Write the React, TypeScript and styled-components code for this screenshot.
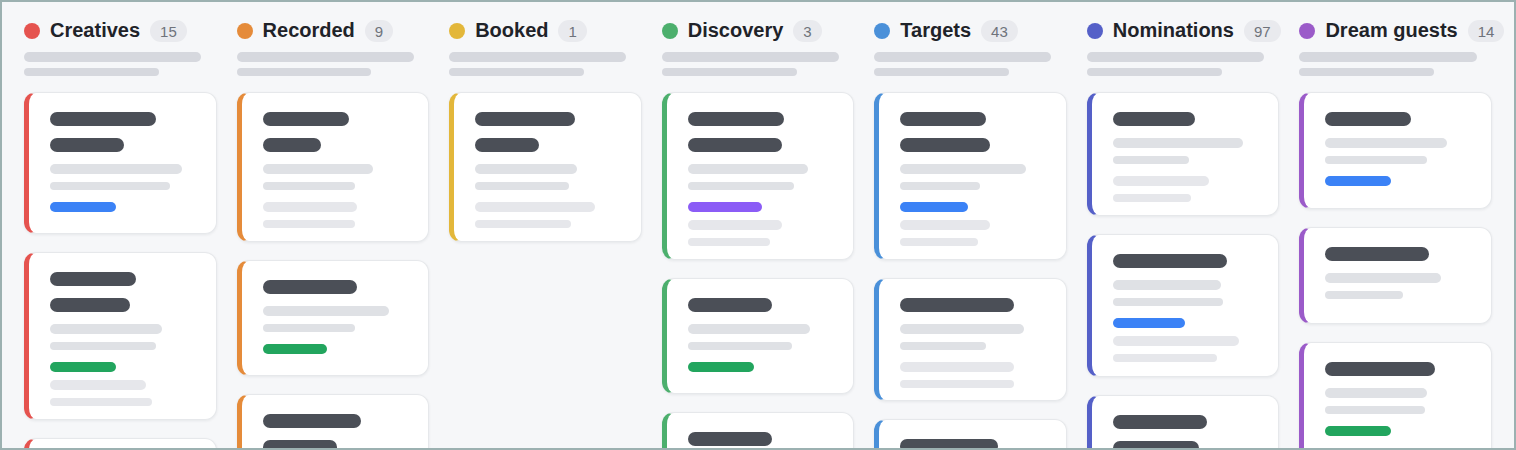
import React from "react";
import styled, { createGlobalStyle } from "styled-components";

type Block =
  | { kind: "title"; widths: number[] }
  | { kind: "pair"; widths: [number, number]; faint?: boolean }
  | { kind: "tag"; width: number; color: string };

interface CardData {
  height: number;
  blocks: Block[];
}

interface Stage {
  name: string;
  count: number;
  color: string;
  cards: CardData[];
}

const BLUE = "#3b82f6";
const GREEN = "#22a55e";
const PURPLE = "#8b5cf6";

const stages: Stage[] = [
  {
    name: "Creatives",
    count: 15,
    color: "#e5534f",
    cards: [
      {
        height: 142,
        blocks: [
          { kind: "title", widths: [106, 74] },
          { kind: "pair", widths: [132, 120] },
          { kind: "tag", width: 66, color: BLUE },
        ],
      },
      {
        height: 168,
        blocks: [
          { kind: "title", widths: [86, 80] },
          { kind: "pair", widths: [112, 106] },
          { kind: "tag", width: 66, color: GREEN },
          { kind: "pair", widths: [96, 102], faint: true },
        ],
      },
      {
        height: 140,
        blocks: [
          { kind: "title", widths: [100, 80] },
          { kind: "pair", widths: [120, 100] },
        ],
      },
    ],
  },
  {
    name: "Recorded",
    count: 9,
    color: "#e58b3a",
    cards: [
      {
        height: 150,
        blocks: [
          { kind: "title", widths: [86, 58] },
          { kind: "pair", widths: [110, 92] },
          { kind: "pair", widths: [94, 92], faint: true },
        ],
      },
      {
        height: 116,
        blocks: [
          { kind: "title", widths: [94] },
          { kind: "pair", widths: [126, 92] },
          { kind: "tag", width: 64, color: GREEN },
        ],
      },
      {
        height: 140,
        blocks: [
          { kind: "title", widths: [98, 74] },
          { kind: "pair", widths: [116, 96] },
        ],
      },
    ],
  },
  {
    name: "Booked",
    count: 1,
    color: "#e3b73a",
    cards: [
      {
        height: 150,
        blocks: [
          { kind: "title", widths: [100, 64] },
          { kind: "pair", widths: [102, 94] },
          { kind: "pair", widths: [120, 96], faint: true },
        ],
      },
    ],
  },
  {
    name: "Discovery",
    count: 3,
    color: "#4caf6d",
    cards: [
      {
        height: 168,
        blocks: [
          { kind: "title", widths: [96, 94] },
          { kind: "pair", widths: [120, 106] },
          { kind: "tag", width: 74, color: PURPLE },
          { kind: "pair", widths: [94, 82], faint: true },
        ],
      },
      {
        height: 116,
        blocks: [
          { kind: "title", widths: [84] },
          { kind: "pair", widths: [122, 104] },
          { kind: "tag", width: 66, color: GREEN },
        ],
      },
      {
        height: 140,
        blocks: [
          { kind: "title", widths: [84, 70] },
          { kind: "pair", widths: [110, 90] },
        ],
      },
    ],
  },
  {
    name: "Targets",
    count: 43,
    color: "#4a90d9",
    cards: [
      {
        height: 168,
        blocks: [
          { kind: "title", widths: [86, 90] },
          { kind: "pair", widths: [126, 80] },
          { kind: "tag", width: 68, color: BLUE },
          { kind: "pair", widths: [90, 78], faint: true },
        ],
      },
      {
        height: 123,
        blocks: [
          { kind: "title", widths: [114] },
          { kind: "pair", widths: [124, 86] },
          { kind: "pair", widths: [114, 114], faint: true },
        ],
      },
      {
        height: 140,
        blocks: [
          { kind: "title", widths: [98, 80] },
          { kind: "pair", widths: [110, 90] },
        ],
      },
    ],
  },
  {
    name: "Nominations",
    count: 97,
    color: "#5560c8",
    cards: [
      {
        height: 124,
        blocks: [
          { kind: "title", widths: [82] },
          { kind: "pair", widths: [130, 76] },
          { kind: "pair", widths: [96, 78], faint: true },
        ],
      },
      {
        height: 143,
        blocks: [
          { kind: "title", widths: [114] },
          { kind: "pair", widths: [108, 110] },
          { kind: "tag", width: 72, color: BLUE },
          { kind: "pair", widths: [126, 104], faint: true },
        ],
      },
      {
        height: 140,
        blocks: [
          { kind: "title", widths: [94, 86] },
          { kind: "pair", widths: [110, 90] },
        ],
      },
    ],
  },
  {
    name: "Dream guests",
    count: 14,
    color: "#9b5bc9",
    cards: [
      {
        height: 117,
        blocks: [
          { kind: "title", widths: [86] },
          { kind: "pair", widths: [122, 102] },
          { kind: "tag", width: 66, color: BLUE },
        ],
      },
      {
        height: 97,
        blocks: [
          { kind: "title", widths: [104] },
          { kind: "pair", widths: [116, 78] },
        ],
      },
      {
        height: 140,
        blocks: [
          { kind: "title", widths: [110] },
          { kind: "pair", widths: [102, 100] },
          { kind: "tag", width: 66, color: GREEN },
        ],
      },
    ],
  },
];

const GlobalStyle = createGlobalStyle`
  html, body {
    margin: 0;
    padding: 0;
    height: 100%;
    overflow: hidden;
  }
  body {
    font-family: "Liberation Sans", Arial, sans-serif;
    background: #f6f7f9;
  }
  #root {
    height: 100%;
  }
`;

const Board = styled.div`
  box-sizing: border-box;
  height: 100vh;
  border: 2px solid #9cb1b1;
  background: #f6f7f9;
  padding: 18px 22px 0;
  overflow: hidden;
  display: grid;
  grid-template-columns: repeat(7, minmax(0, 1fr));
  column-gap: 20px;
  align-items: start;
`;

const Column = styled.section`
  display: flex;
  flex-direction: column;
  min-width: 0;
`;

const ColumnHeader = styled.header`
  display: flex;
  align-items: center;
  gap: 10px;
  height: 22px;
  margin-bottom: 10px;
`;

const Dot = styled.span<{ $color: string }>`
  width: 16px;
  height: 16px;
  border-radius: 50%;
  background: ${(p) => p.$color};
  flex-shrink: 0;
`;

const Title = styled.h2`
  margin: -2px 0 0;
  font-size: 20px;
  font-weight: 700;
  color: #1f2329;
  white-space: nowrap;
  line-height: 22px;
`;

const Count = styled.span`
  display: inline-flex;
  align-items: center;
  height: 22px;
  padding: 0 10px;
  border-radius: 11px;
  background: #e9eaee;
  color: #6f737b;
  font-size: 15px;
`;

const Summary = styled.div`
  display: flex;
  flex-direction: column;
  gap: 6px;
  margin-bottom: 16px;
`;

const SummaryLine = styled.div<{ $width: string; $h: number }>`
  width: ${(p) => p.$width};
  height: ${(p) => p.$h}px;
  border-radius: ${(p) => p.$h / 2}px;
  background: #d6d8de;
`;

const CardList = styled.div`
  display: flex;
  flex-direction: column;
  gap: 18px;
`;

const Card = styled.article<{ $accent: string; $height: number }>`
  box-sizing: border-box;
  height: ${(p) => p.$height}px;
  flex-shrink: 0;
  background: #fff;
  border: 1px solid #e6e8eb;
  border-left: 5px solid ${(p) => p.$accent};
  border-radius: 12px;
  box-shadow: 0 1px 3px rgba(16, 24, 40, 0.07);
  padding: 19px 18px 0 21px;
  display: flex;
  flex-direction: column;
  gap: 12px;
`;

const TitleLines = styled.div`
  display: flex;
  flex-direction: column;
  gap: 12px;
`;

const TitleLine = styled.div<{ $width: number }>`
  width: ${(p) => p.$width}px;
  height: 14px;
  border-radius: 7px;
  background: #4b4f57;
`;

const Pair = styled.div`
  display: flex;
  flex-direction: column;
  gap: 8px;
`;

const TextLine = styled.div<{ $width: number; $h: number; $faint?: boolean }>`
  width: ${(p) => p.$width}px;
  height: ${(p) => p.$h}px;
  border-radius: ${(p) => p.$h / 2}px;
  background: ${(p) => (p.$faint ? "#e6e7eb" : "#dfe1e5")};
`;

const Tag = styled.div<{ $width: number; $color: string }>`
  width: ${(p) => p.$width}px;
  height: 10px;
  border-radius: 5px;
  background: ${(p) => p.$color};
  margin-bottom: -4px;
`;

const renderBlock = (block: Block, i: number) => {
  if (block.kind === "title") {
    return (
      <TitleLines key={i}>
        {block.widths.map((w, j) => (
          <TitleLine key={j} $width={w} />
        ))}
      </TitleLines>
    );
  }
  if (block.kind === "pair") {
    return (
      <Pair key={i}>
        <TextLine $width={block.widths[0]} $h={10} $faint={block.faint} />
        <TextLine $width={block.widths[1]} $h={8} $faint={block.faint} />
      </Pair>
    );
  }
  return <Tag key={i} $width={block.width} $color={block.color} />;
};

const App: React.FC = () => (
  <>
    <GlobalStyle />
    <Board>
      {stages.map((stage) => (
        <Column key={stage.name}>
          <ColumnHeader>
            <Dot $color={stage.color} />
            <Title>{stage.name}</Title>
            <Count>{stage.count}</Count>
          </ColumnHeader>
          <Summary>
            <SummaryLine $width="92%" $h={10} />
            <SummaryLine $width="70%" $h={8} />
          </Summary>
          <CardList>
            {stage.cards.map((card, i) => (
              <Card key={i} $accent={stage.color} $height={card.height}>
                {card.blocks.map(renderBlock)}
              </Card>
            ))}
          </CardList>
        </Column>
      ))}
    </Board>
  </>
);

export default App;
